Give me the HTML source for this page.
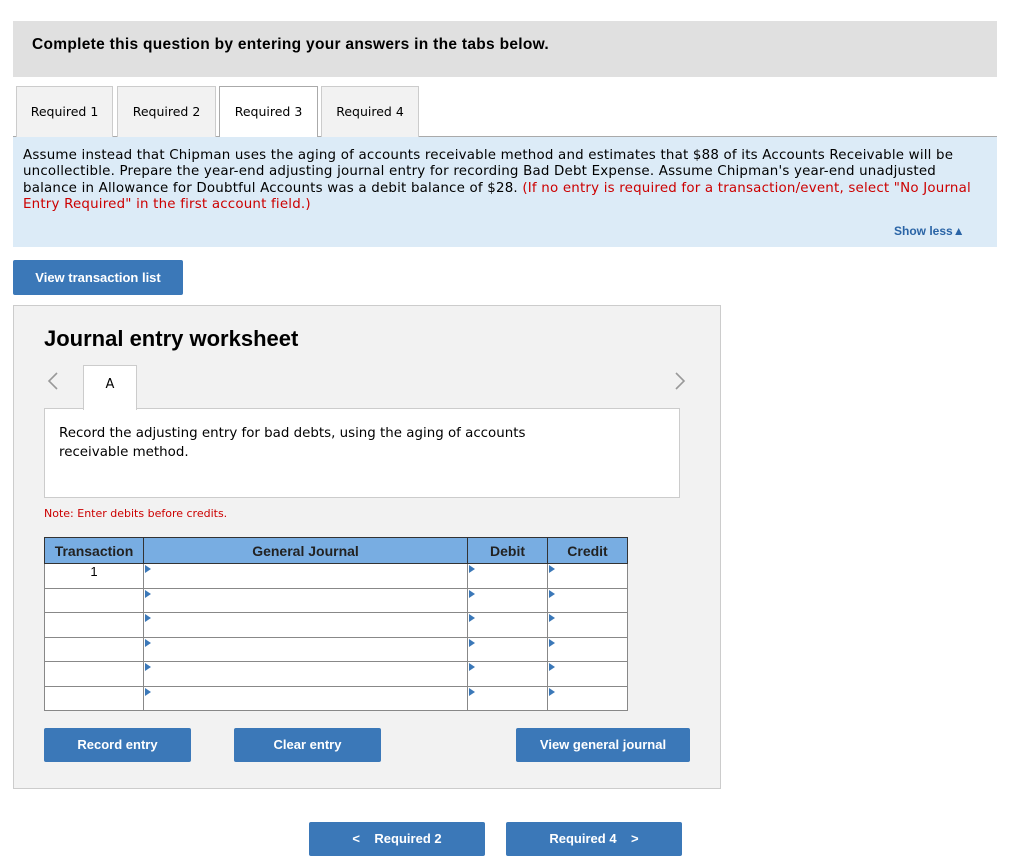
<!DOCTYPE html>
<html><head><style>
*{box-sizing:border-box;margin:0;padding:0}
body{width:1024px;height:857px;background:#fff;font-family:"DejaVu Sans","Liberation Sans",sans-serif;position:relative;overflow:hidden;color:#000}
.a{position:absolute}
.tab{position:absolute;top:86px;height:51px;background:#f2f2f2;border:1px solid #ccc;border-bottom:none;font-size:12.5px;line-height:50px;text-align:center}
.btn{position:absolute;background:#3b78b8;color:#fff;font-family:"Liberation Sans",sans-serif;font-weight:bold;font-size:13px;text-align:center;border-radius:2px}
table{border-collapse:collapse;position:absolute;left:44px;top:537px;font-family:"Liberation Sans",sans-serif;background:#fff}
td,th{border:1px solid #888;height:24.5px;padding:0;position:relative}
th{background:#78ade2;font-size:14px;border:1px solid #333;height:26px;color:#222}
td i{position:absolute;left:1px;top:1px;width:0;height:0;border-top:4px solid transparent;border-bottom:4px solid transparent;border-left:6px solid #3b78b8}
</style></head><body>
<div class="a" style="left:13px;top:21px;width:984px;height:56px;background:#e0e0e0"></div>
<div class="a" style="left:32px;top:36px;font-size:15.5px;font-weight:bold;font-family:'Liberation Sans',sans-serif;letter-spacing:0.3px">Complete this question by entering your answers in the tabs below.</div>
<div class="a" style="left:13px;top:136px;width:984px;height:1px;background:#aaa"></div>
<div class="tab" style="left:16px;width:97px">Required 1</div>
<div class="tab" style="left:117px;width:99px">Required 2</div>
<div class="tab" style="left:219px;width:99px;background:#fff;height:52px;border-color:#aaa">Required 3</div>
<div class="tab" style="left:321px;width:98px">Required 4</div>
<div class="a" style="left:13px;top:137px;width:984px;height:110px;background:#dcebf7"></div>
<div class="a" style="left:23px;top:148px;width:962px;font-size:13.4px;line-height:16.3px;letter-spacing:0.2px">Assume instead that Chipman uses the aging of accounts receivable method and estimates that $88 of its Accounts Receivable will be uncollectible. Prepare the year-end adjusting journal entry for recording Bad Debt Expense. Assume Chipman's year-end unadjusted balance in Allowance for Doubtful Accounts was a debit balance of $28. <span style="color:#c00">(If no entry is required for a transaction/event, select "No Journal Entry Required" in the first account field.)</span></div>
<div class="a" style="left:894px;top:224px;font-size:12px;font-weight:bold;color:#2a64a6;font-family:'Liberation Sans',sans-serif">Show less▲</div>
<div class="btn" style="left:13px;top:260px;width:170px;height:35px;line-height:35px">View transaction list</div>
<div class="a" style="left:13px;top:305px;width:708px;height:484px;background:#f2f2f2;border:1px solid #ccc"></div>
<div class="a" style="left:44px;top:326px;font-size:22px;font-weight:bold;font-family:'Liberation Sans',sans-serif">Journal entry worksheet</div>
<svg class="a" style="left:46px;top:372px" width="14" height="18"><path d="M11 1L3 9l8 8" stroke="#999" stroke-width="1.6" fill="none"/></svg>
<svg class="a" style="left:673px;top:372px" width="14" height="18"><path d="M3 1l8 8-8 8" stroke="#999" stroke-width="1.6" fill="none"/></svg>
<div class="a" style="left:44px;top:408px;width:636px;height:90px;background:#fff;border:1px solid #ccc"></div>
<div class="a" style="left:83px;top:365px;width:54px;height:45px;background:#fff;border:1px solid #ccc;border-bottom:none;text-align:center;line-height:38px;font-size:13px">A</div>
<div class="a" style="left:59px;top:424px;width:500px;font-size:13.4px;line-height:19px">Record the adjusting entry for bad debts, using the aging of accounts receivable method.</div>
<div class="a" style="left:44px;top:507px;font-size:11px;color:#c00">Note: Enter debits before credits.</div>
<table>
<tr><th style="width:99px">Transaction</th><th style="width:324px">General Journal</th><th style="width:80px">Debit</th><th style="width:80px">Credit</th></tr>
<tr><td style="text-align:center;font-size:13px;vertical-align:top">1</td><td><i></i></td><td><i></i></td><td><i></i></td></tr>
<tr><td></td><td><i></i></td><td><i></i></td><td><i></i></td></tr>
<tr><td></td><td><i></i></td><td><i></i></td><td><i></i></td></tr>
<tr><td></td><td><i></i></td><td><i></i></td><td><i></i></td></tr>
<tr><td></td><td><i></i></td><td><i></i></td><td><i></i></td></tr>
<tr><td></td><td><i></i></td><td><i></i></td><td><i></i></td></tr>
</table>
<div class="btn" style="left:44px;top:728px;width:147px;height:34px;line-height:34px">Record entry</div>
<div class="btn" style="left:234px;top:728px;width:147px;height:34px;line-height:34px">Clear entry</div>
<div class="btn" style="left:516px;top:728px;width:174px;height:34px;line-height:34px">View general journal</div>
<div class="btn" style="left:309px;top:822px;width:176px;height:34px;line-height:34px">&lt;&nbsp;&nbsp;&nbsp;&nbsp;Required 2</div>
<div class="btn" style="left:506px;top:822px;width:176px;height:34px;line-height:34px">Required 4&nbsp;&nbsp;&nbsp;&nbsp;&gt;</div>
</body></html>
